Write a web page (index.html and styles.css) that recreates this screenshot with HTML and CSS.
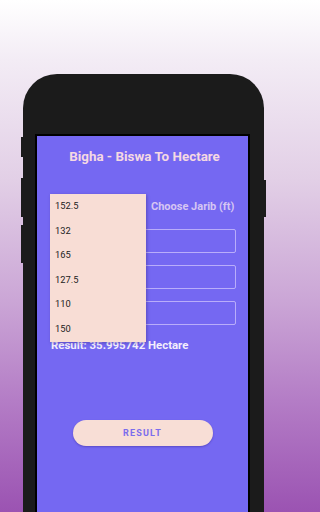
FILE: index.html
```html
<!DOCTYPE html>
<html>
<head>
<meta charset="utf-8">
<link rel="stylesheet" href="styles.css">
</head>
<body>
<div class="phone">
  <span class="btn btn-l1"></span>
  <span class="btn btn-l2"></span>
  <span class="btn btn-l3"></span>
  <span class="btn btn-r1"></span>
  <div class="screen">
    <h1 class="title">Bigha - Biswa To Hectare</h1>
    <div class="jarib-row">
      <div class="spinner-slot"></div>
      <span class="jarib-label">Choose Jarib (ft)</span>
    </div>
    <div class="inputs">
      <div class="field"></div>
      <div class="field"></div>
      <div class="field"></div>
    </div>
    <p class="result-text">Result: 35.995742 Hectare</p>
    <button class="result-btn">RESULT</button>
    <ul class="dropdown">
      <li>152.5</li>
      <li>132</li>
      <li>165</li>
      <li>127.5</li>
      <li>110</li>
      <li>150</li>
    </ul>
  </div>
</div>
</body>
</html>
```
FILE: styles.css
```css
html, body {
  margin: 0;
  padding: 0;
}
body {
  width: 288px;
  height: 512px;
  overflow: hidden;
  font-family: Roboto, "Liberation Sans", sans-serif;
  background: linear-gradient(180deg, #ffffff 0px, #f3ecf5 60px, #e2cfe6 180px, #cba6d6 300px, #b47dc6 400px, #9b53b2 512px);
}
.phone {
  position: relative;
  margin: 74px 0 0 23px;
  width: 241px;
  height: 460px;
  background: #1b1b1b;
  border-radius: 34px 34px 0 0;
  box-sizing: border-box;
  padding: 60px 0 0 12px;
}
.btn {
  position: absolute;
  background: #1b1b1b;
  width: 3px;
}
.btn-l1 { left: -2px; top: 63px; height: 20px; }
.btn-l2 { left: -2px; top: 104px; height: 39px; }
.btn-l3 { left: -2px; top: 151px; height: 38px; }
.btn-r1 { right: -2px; top: 106px; height: 37px; }
.screen {
  position: relative;
  width: 215px;
  height: 400px;
  box-sizing: border-box;
  border: 2px solid #000;
  border-bottom: none;
  background: #7568f2;
  padding: 13px 12px 0 14px;
  display: flex;
  flex-direction: column;
}
.title {
  margin: 0;
  font-size: 13.4px;
  line-height: 16px;
  font-weight: 700;
  color: #f5d9e3;
  text-align: center;
  padding-left: 2px;
}
.jarib-row {
  display: flex;
  align-items: center;
  margin-top: 34px;
  height: 14px;
}
.spinner-slot {
  width: 100px;
  flex: none;
}
.jarib-label {
  font-size: 11px;
  font-weight: 700;
  color: #d6c5f3;
  white-space: nowrap;
}
.inputs {
  display: flex;
  flex-direction: column;
  gap: 12px;
  margin-top: 16px;
}
.field {
  height: 24px;
  box-sizing: border-box;
  border: 1px solid rgba(230, 220, 255, 0.6);
  border-radius: 2px;
}
.result-text {
  margin: 13px 0 0 0;
  font-size: 11.4px;
  line-height: 14px;
  font-weight: 700;
  color: #f3eefc;
}
.result-btn {
  align-self: center;
  margin: 68px 0 0 -2px;
  width: 140px;
  height: 26px;
  border: none;
  border-radius: 13px;
  background: #f8ded6;
  color: #7b6ced;
  font-family: Roboto, "Liberation Sans", sans-serif;
  font-size: 9px;
  font-weight: 700;
  letter-spacing: 1.2px;
  box-shadow: 0 1px 2px rgba(40, 20, 120, 0.35);
  padding: 0;
}
.dropdown {
  position: absolute;
  left: 13px;
  top: 58px;
  width: 96px;
  margin: 0;
  padding: 0;
  list-style: none;
  background: #f8ddd5;
  box-shadow: 1px 1px 3px rgba(40, 20, 100, 0.35);
}
.dropdown li {
  height: 24.6px;
  line-height: 24.6px;
  padding-left: 5px;
  font-size: 9.3px;
  color: #222;
}
```
